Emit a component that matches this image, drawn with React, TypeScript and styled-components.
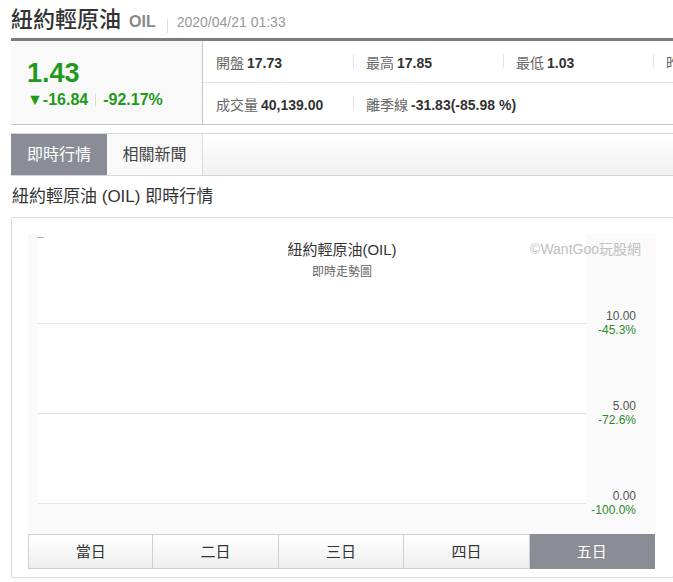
import React from "react";
import styled, { createGlobalStyle } from "styled-components";

const GlobalStyle = createGlobalStyle`
  html, body {
    margin: 0;
    padding: 0;
    background: #fff;
    overflow: hidden;
  }
  body {
    font-family: "Liberation Sans", Arial, "Noto Sans CJK TC", sans-serif;
    color: #333;
  }
`;

const GREEN = "#1f9a1c";

const stats = [
  [
    { label: "開盤", value: "17.73" },
    { label: "最高", value: "17.85" },
    { label: "最低", value: "1.03" },
    { label: "昨收", value: "18.27" },
  ],
  [
    { label: "成交量", value: "40,139.00" },
    { label: "離季線", value: "-31.83(-85.98 %)" },
  ],
];

const ranges = ["當日", "二日", "三日", "四日", "五日"];

const axis = [
  { price: "10.00", pct: "-45.3%", y: 90 },
  { price: "5.00", pct: "-72.6%", y: 180 },
  { price: "0.00", pct: "-100.0%", y: 270 },
];

const App: React.FC = () => {
  return (
    <>
      <GlobalStyle />
      <Page>
        <TitleRow>
          <Name>紐約輕原油</Name>
          <Symbol>OIL</Symbol>
          <TitleDivider />
          <Stamp>2020/04/21 01:33</Stamp>
        </TitleRow>

        <QuoteBox>
          <PricePanel>
            <Price>1.43</Price>
            <ChangeRow>
              <span>▼-16.84</span>
              <ChangeDivider />
              <span>-92.17%</span>
            </ChangeRow>
          </PricePanel>
          <StatTable>
            {stats.map((row, r) => (
              <StatRow key={r} $last={r === stats.length - 1}>
                {row.map((cell, i) => (
                  <StatCell key={cell.label} $first={i === 0}>
                    <StatLabel>{cell.label}</StatLabel>
                    <StatValue>{cell.value}</StatValue>
                  </StatCell>
                ))}
              </StatRow>
            ))}
          </StatTable>
        </QuoteBox>

        <TabBar>
          <Tab $active>即時行情</Tab>
          <Tab>相關新聞</Tab>
        </TabBar>

        <Heading>紐約輕原油 (OIL) 即時行情</Heading>

        <ChartBox>
          <ChartSvg width={628} height={300} viewBox="0 0 628 300">
            <rect x={0} y={0} width={628} height={300} fill="#fafafa" />
            <rect x={10} y={0} width={548} height={270} fill="#fff" />
            <line x1={9} y1={3.5} x2={16} y2={3.5} stroke="#b5b5b5" strokeWidth={1} />
            {axis.map((a) => (
              <g key={a.price}>
                <line x1={10} y1={a.y - 0.5} x2={558} y2={a.y - 0.5} stroke="#e6e6e6" strokeWidth={1} />
                <text x={608} y={a.y - 4} textAnchor="end" fontSize={12} fill="#555">
                  {a.price}
                </text>
                <text x={608} y={a.y + 10} textAnchor="end" fontSize={12} fill="#2b8a2b">
                  {a.pct}
                </text>
              </g>
            ))}
            <text x={314} y={21} textAnchor="middle" fontSize={15} fill="#333">
              紐約輕原油(OIL)
            </text>
            <text x={314} y={42} textAnchor="middle" fontSize={12} fill="#666">
              即時走勢圖
            </text>
            <text x={613} y={20} textAnchor="end" fontSize={14} fill="#c0c0c0">
              ©WantGoo玩股網
            </text>
          </ChartSvg>
          <RangeBar>
            {ranges.map((r, i) => (
              <RangeButton key={r} $active={i === ranges.length - 1}>
                {r}
              </RangeButton>
            ))}
          </RangeBar>
        </ChartBox>
      </Page>
    </>
  );
};

export default App;

// Styled Components

const Page = styled.div`
  width: 663px;
  padding-left: 11px;
`;

const TitleRow = styled.div`
  display: flex;
  align-items: baseline;
  height: 38px;
  padding-top: 7px;
  box-sizing: border-box;
`;

const Name = styled.h1`
  margin: 0;
  font-size: 22px;
  font-weight: 500;
  color: #333;
  line-height: 26px;
`;

const Symbol = styled.span`
  margin-left: 8px;
  font-size: 16px;
  font-weight: bold;
  color: #888;
`;

const TitleDivider = styled.span`
  display: inline-block;
  width: 1px;
  height: 14px;
  background: #ddd;
  margin: 0 9px 0 11px;
  align-self: center;
  position: relative;
  top: 3px;
`;

const Stamp = styled.span`
  font-size: 14px;
  color: #999;
`;

const QuoteBox = styled.div`
  display: flex;
  width: 700px;
  border-top: 3px solid #7b7c80;
  border-bottom: 1px solid #c8c8c8;
  height: 87px;
  box-sizing: border-box;
`;

const PricePanel = styled.div`
  width: 192px;
  flex-shrink: 0;
  box-sizing: border-box;
  background: #f9f9f9;
  border-right: 1px solid #c8c8c8;
  padding: 16px 0 0 16px;
  color: ${GREEN};
  font-weight: bold;
`;

const Price = styled.div`
  font-size: 27px;
  line-height: 32px;
`;

const ChangeRow = styled.div`
  display: flex;
  align-items: center;
  font-size: 16px;
  line-height: 20px;
  margin-top: 1px;
`;

const ChangeDivider = styled.span`
  width: 1px;
  height: 14px;
  background: #ddd;
  margin: 0 7px 0 7px;
`;

const StatTable = styled.div`
  display: flex;
  flex-direction: column;
  flex: 1;
`;

const StatRow = styled.div<{ $last?: boolean }>`
  display: flex;
  height: 42px;
  align-items: center;
  border-bottom: ${(p) => (p.$last ? "none" : "1px solid #e6e6e6")};
`;

const StatCell = styled.div<{ $first?: boolean }>`
  width: 150px;
  flex-shrink: 0;
  box-sizing: border-box;
  padding-left: 13px;
  font-size: 14px;
  white-space: nowrap;
  position: relative;

  &::before {
    content: "";
    display: ${(p) => (p.$first ? "none" : "block")};
    position: absolute;
    left: 0;
    top: 2px;
    width: 1px;
    height: 14px;
    background: #e3e3e3;
  }
`;

const StatLabel = styled.span`
  color: #666;
  margin-right: 3px;
`;

const StatValue = styled.span`
  color: #333;
  font-weight: bold;
`;

const TabBar = styled.div`
  display: flex;
  margin-top: 8px;
  height: 43px;
  box-sizing: border-box;
  border: 1px solid #d6d6d6;
  border-left: none;
  border-right: none;
  background: linear-gradient(#ffffff, #f1f1f1);
`;

const Tab = styled.div<{ $active?: boolean }>`
  width: ${(p) => (p.$active ? "96px" : "95px")};
  display: flex;
  align-items: center;
  justify-content: center;
  padding-bottom: 3px;
  font-size: 16px;
  color: ${(p) => (p.$active ? "#fff" : "#444")};
  background: ${(p) => (p.$active ? "#8a8d96" : "#f9f9f9")};
  border-right: ${(p) => (p.$active ? "none" : "1px solid #dcdcdc")};
`;

const Heading = styled.h2`
  margin: 0;
  padding: 10px 0 0 1px;
  height: 41px;
  box-sizing: border-box;
  font-size: 17px;
  font-weight: normal;
  color: #333;
  line-height: 22px;
`;

const ChartBox = styled.div`
  border: 1px solid #dcdcdc;
  border-radius: 2px;
  padding: 16px 17px 8px 16px;
`;

const ChartSvg = styled.svg`
  display: block;
  font-family: "Liberation Sans", Arial, "Noto Sans CJK TC", sans-serif;
`;

const RangeBar = styled.div`
  display: grid;
  grid-template-columns: repeat(5, 1fr);
  width: 627px;
  height: 35px;
`;

const RangeButton = styled.div<{ $active?: boolean }>`
  display: flex;
  align-items: center;
  justify-content: center;
  padding-bottom: 2px;
  font-size: 15px;
  color: ${(p) => (p.$active ? "#fff" : "#333")};
  background: ${(p) => (p.$active ? "#8a8d96" : "linear-gradient(#ffffff, #efefef)")};
  border: 1px solid ${(p) => (p.$active ? "#8a8d96" : "#cfcfcf")};
  border-left: none;
  &:first-child {
    border-left: 1px solid #cfcfcf;
  }
`;
